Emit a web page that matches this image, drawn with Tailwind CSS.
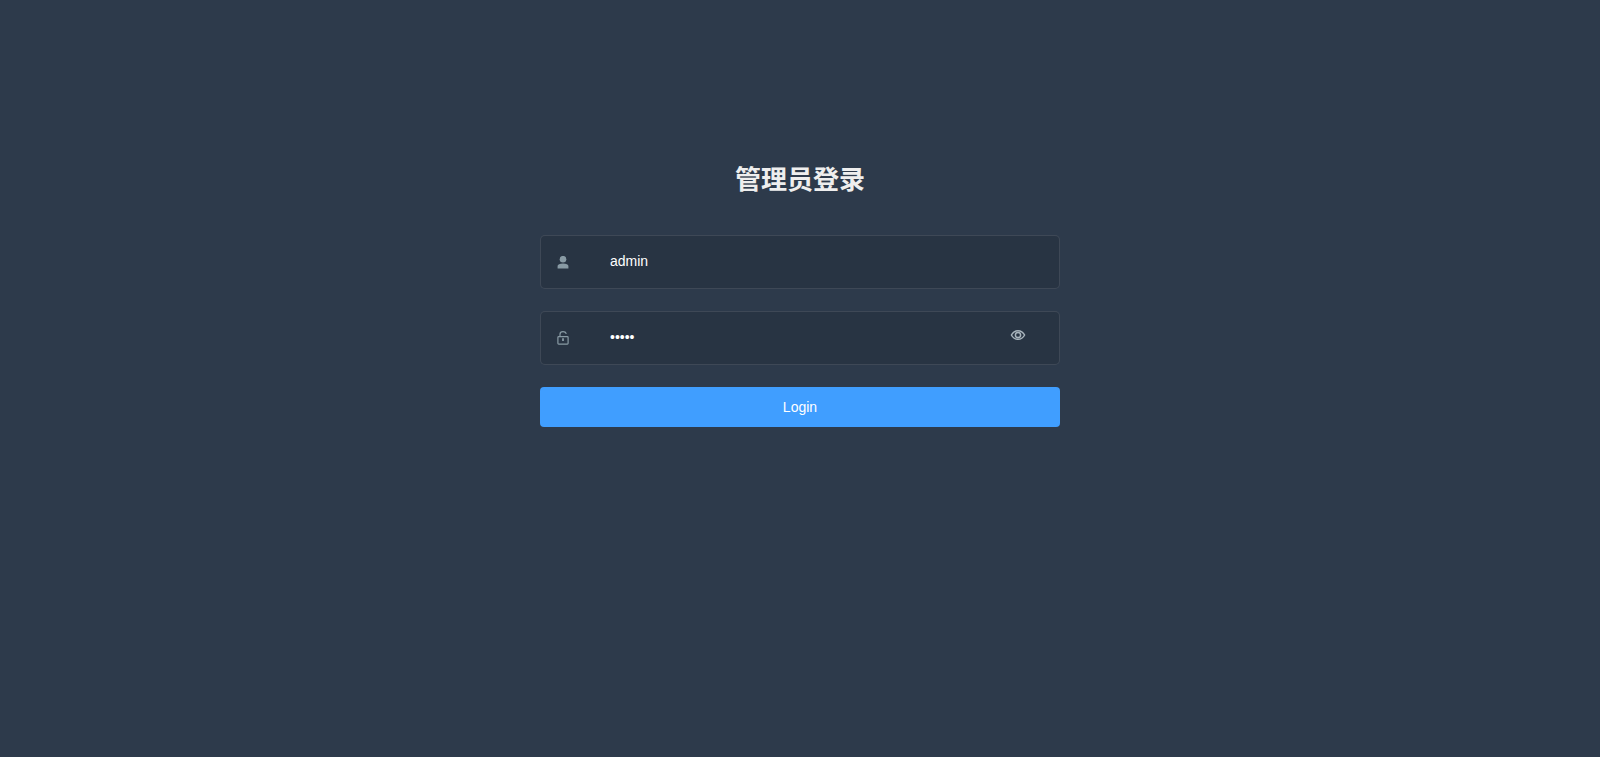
<!DOCTYPE html>
<html lang="zh-CN">
<head>
    <meta charset="UTF-8">
    <meta name="viewport" content="width=device-width, initial-scale=1.0">
    <title>管理员登录</title>
    <script src="https://cdn.jsdelivr.net/npm/@tailwindcss/browser@4"></script>
</head>
<body class="min-h-screen bg-[#2d3a4b] font-['Liberation_Sans','Noto_Sans_CJK_SC',sans-serif]">
    <div class="mx-auto w-[520px] pt-[160px]">
        <h3 class="mb-[34px] text-center text-[26px] leading-[41px] font-bold text-[#eeeeee]">管理员登录</h3>
        <form>
            <div class="mb-[22px] flex h-[54px] items-center rounded-[5px] border border-white/10 bg-black/10">
                <svg class="ml-[15px] mt-[2px] h-[14px] w-[14px] text-[#889aa4]" viewBox="0 0 14 14" fill="currentColor">
                    <circle cx="7" cy="3.200" r="3.300"/>
                    <path d="M1.600 12.600V10C1.600 8.400 3.800 7.400 7 7.400s5.400 1 5.400 2.600v2.600z"/>
                </svg>
                <input type="text" value="admin" class="ml-[25px] h-full min-w-0 flex-1 pb-[2px] pl-[15px] pr-[5px] text-sm text-white outline-none">
            </div>
            <div class="relative mb-[22px] flex h-[54px] items-center rounded-[5px] border border-white/10 bg-black/10">
                <svg class="ml-[15px] h-[14px] w-[14px] text-[#889aa4]" viewBox="0 0 14 14" fill="none" stroke="currentColor" stroke-width="1.200">
                    <rect x="1.900" y="5.600" width="10.200" height="7.500" rx="0.800"/>
                    <path d="M4 5.600V3.200C4 1.500 5.300.6 7 .6c1.500 0 2.800.7 3.400 2.100"/>
                    <path d="M7 7.200v2.800" stroke-width="1.800"/>
                </svg>
                <input type="password" value="admin" class="ml-[25px] h-full min-w-0 flex-1 pb-[2px] pl-[15px] pr-[5px] text-sm text-white outline-none">
                <svg class="absolute right-[33px] top-[15px] h-[16px] w-[16px] text-[#a9b5bd]" viewBox="0 0 16 16" fill="none" stroke="currentColor" stroke-width="1.500">
                    <path d="M1.400 8C3 5 5.200 3.700 8 3.700S13 5 14.600 8C13 11 10.800 12.300 8 12.300S3 11 1.400 8z"/>
                    <circle cx="8" cy="8" r="2.600"/>
                </svg>
            </div>
            <button type="button" class="h-[40px] w-full rounded-[4px] bg-[#409eff] text-sm text-white">Login</button>
        </form>
    </div>
</body>
</html>
